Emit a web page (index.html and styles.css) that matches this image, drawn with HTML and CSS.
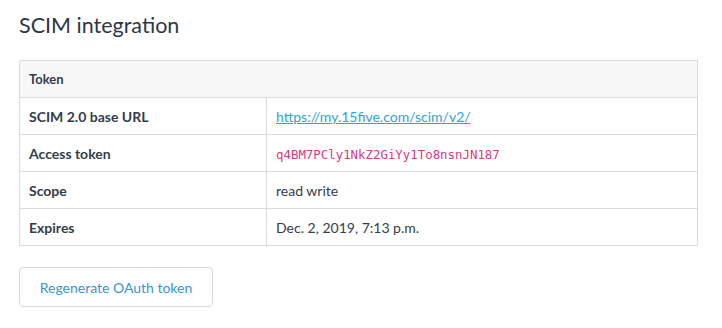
FILE: index.html
```html
<!DOCTYPE html>
<html>
<head>
  <meta charset="utf-8">
  <title>SCIM integration</title>
  <link rel="stylesheet" href="styles.css">
</head>
<body>
  <!-- Page heading -->
  <h2 class="page-title">SCIM integration</h2>

  <!-- Token details -->
  <table class="token-table">
    <thead>
      <tr>
        <th colspan="2">Token</th>
      </tr>
    </thead>
    <tbody>
      <tr>
        <td class="label">SCIM 2.0 base URL</td>
        <td><a href="#">https://my.15five.com/scim/v2/</a></td>
      </tr>
      <tr>
        <td class="label">Access token</td>
        <td><code>q4BM7PCly1NkZ2GiYy1To8nsnJN187</code></td>
      </tr>
      <tr>
        <td class="label">Scope</td>
        <td>read write</td>
      </tr>
      <tr>
        <td class="label">Expires</td>
        <td>Dec. 2, 2019, 7:13 p.m.</td>
      </tr>
    </tbody>
  </table>

  <button class="btn-regenerate">Regenerate OAuth token</button>
</body>
</html>
```

FILE: styles.css
```css
body {
  margin: 0;
  padding: 12px 19px;
  background: #fff;
  color: #333d4b;
  font-family: Lato, "Liberation Sans", sans-serif;
  font-size: 14px;
}
/* Heading */
.page-title {
  margin: 0 0 22px;
  font-size: 21.5px;
  font-weight: 400;
  line-height: 26px;
  color: #2d3847;
}
/* Table */
.token-table {
  width: 679px;
  border-collapse: collapse;
  margin-bottom: 21px;
}
.token-table th,
.token-table td {
  border: 1px solid #dadbdd;
  height: 36px;
  padding: 0 9px;
  text-align: left;
  vertical-align: middle;
}
.token-table th {
  background: #f7f7f7;
  font-weight: 700;
  font-size: 13px;
}
.token-table td.label {
  width: 228px;
  font-weight: 700;
}
.token-table a {
  color: #2ea3dc;
}
.token-table code {
  font-family: "DejaVu Sans Mono", monospace;
  font-size: 12.4px;
  color: #e0377e;
}
/* Button */
.btn-regenerate {
  width: 194px;
  height: 40px;
  background: #fff;
  border: 1px solid #d5d8dc;
  border-radius: 4px;
  color: #3597cf;
  font-family: Lato, "Liberation Sans", sans-serif;
  font-size: 14px;
  cursor: pointer;
}
```
